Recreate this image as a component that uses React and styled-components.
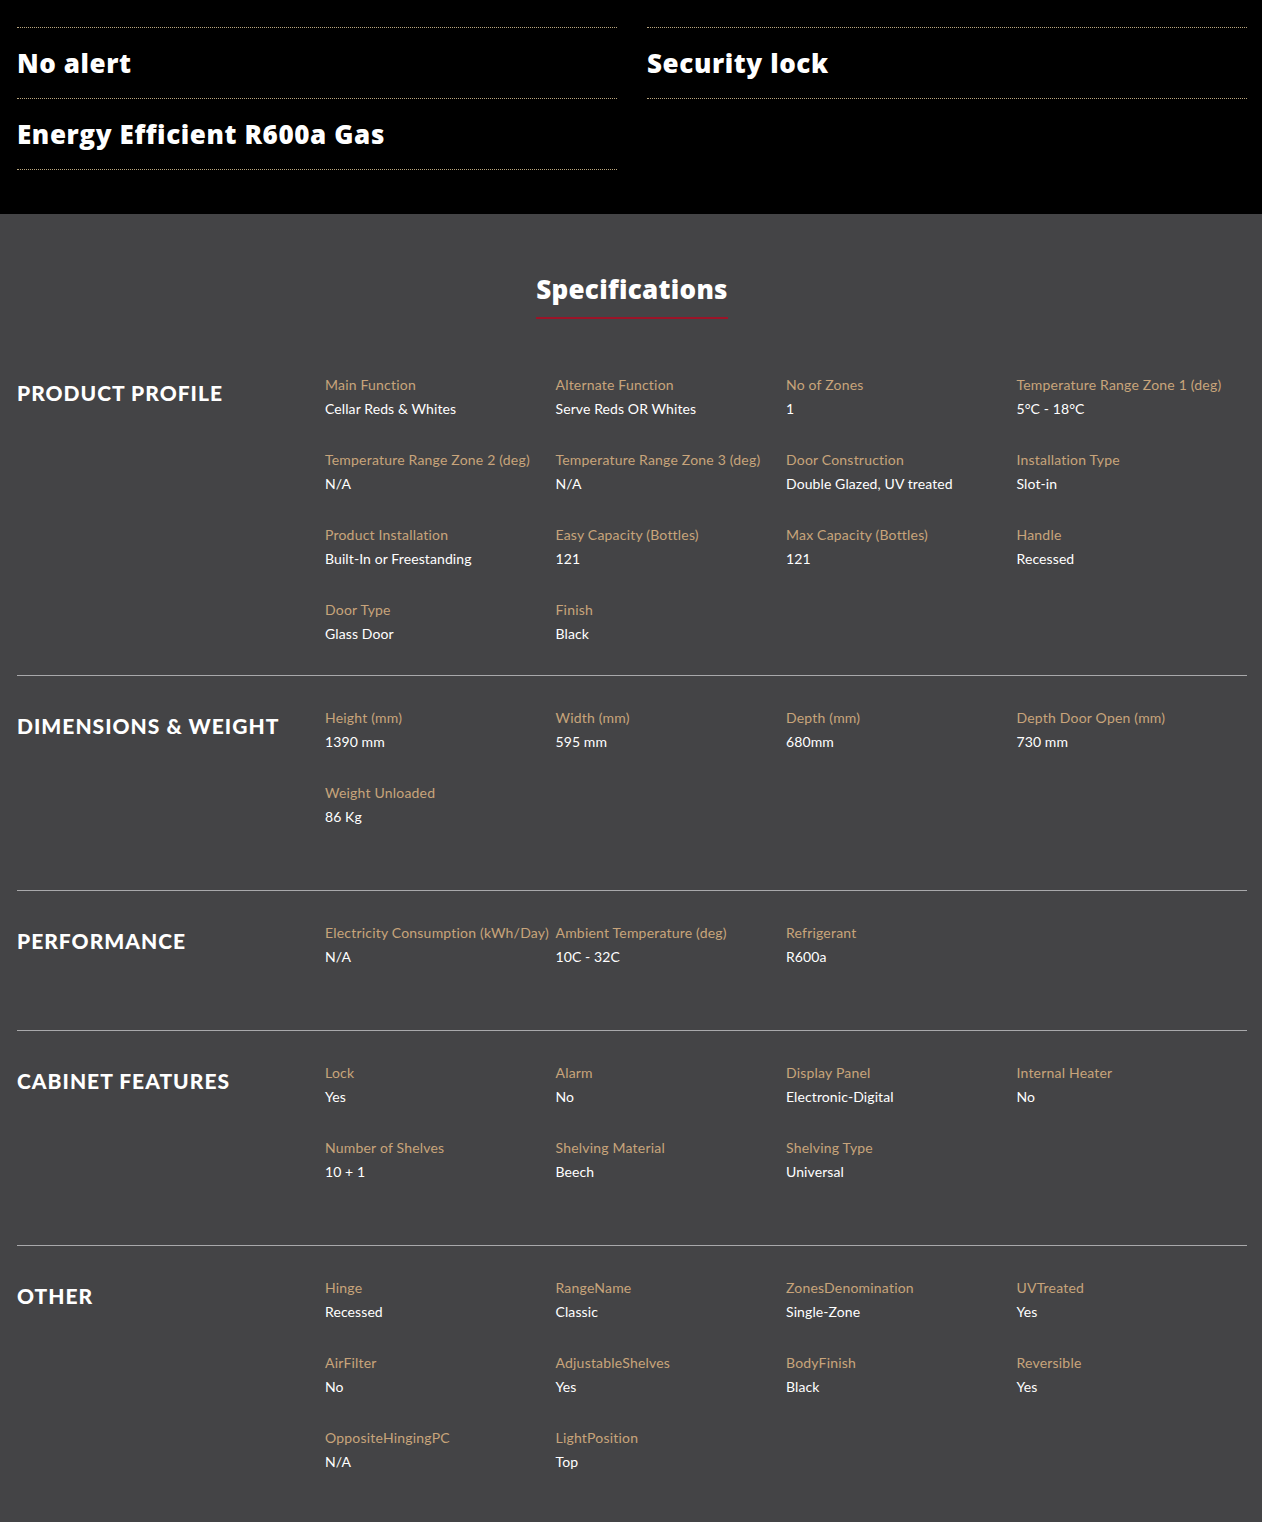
import React from 'react';
import styled, { createGlobalStyle } from 'styled-components';

const highlights = [
  ['No alert', 'Energy Efficient R600a Gas'],
  ['Security lock'],
];

const sections = [
  {
    title: 'PRODUCT PROFILE',
    items: [
      ['Main Function', 'Cellar Reds & Whites'],
      ['Alternate Function', 'Serve Reds OR Whites'],
      ['No of Zones', '1'],
      ['Temperature Range Zone 1 (deg)', '5°C - 18°C'],
      ['Temperature Range Zone 2 (deg)', 'N/A'],
      ['Temperature Range Zone 3 (deg)', 'N/A'],
      ['Door Construction', 'Double Glazed, UV treated'],
      ['Installation Type', 'Slot-in'],
      ['Product Installation', 'Built-In or Freestanding'],
      ['Easy Capacity (Bottles)', '121'],
      ['Max Capacity (Bottles)', '121'],
      ['Handle', 'Recessed'],
      ['Door Type', 'Glass Door'],
      ['Finish', 'Black'],
    ],
  },
  {
    title: 'DIMENSIONS & WEIGHT',
    items: [
      ['Height (mm)', '1390 mm'],
      ['Width (mm)', '595 mm'],
      ['Depth (mm)', '680mm'],
      ['Depth Door Open (mm)', '730 mm'],
      ['Weight Unloaded', '86 Kg'],
    ],
  },
  {
    title: 'PERFORMANCE',
    items: [
      ['Electricity Consumption (kWh/Day)', 'N/A'],
      ['Ambient Temperature (deg)', '10C - 32C'],
      ['Refrigerant', 'R600a'],
    ],
  },
  {
    title: 'CABINET FEATURES',
    items: [
      ['Lock', 'Yes'],
      ['Alarm', 'No'],
      ['Display Panel', 'Electronic-Digital'],
      ['Internal Heater', 'No'],
      ['Number of Shelves', '10 + 1'],
      ['Shelving Material', 'Beech'],
      ['Shelving Type', 'Universal'],
    ],
  },
  {
    title: 'OTHER',
    items: [
      ['Hinge', 'Recessed'],
      ['RangeName', 'Classic'],
      ['ZonesDenomination', 'Single-Zone'],
      ['UVTreated', 'Yes'],
      ['AirFilter', 'No'],
      ['AdjustableShelves', 'Yes'],
      ['BodyFinish', 'Black'],
      ['Reversible', 'Yes'],
      ['OppositeHingingPC', 'N/A'],
      ['LightPosition', 'Top'],
    ],
  },
];

function App() {
  return (
    <>
      <GlobalStyle />
      <Highlights>
        {highlights.map((col, i) => (
          <HighlightColumn key={i}>
            {col.map((text) => (
              <HighlightItem key={text}>{text}</HighlightItem>
            ))}
          </HighlightColumn>
        ))}
      </Highlights>

      <Specs>
        <SpecTitle>
          <span>Specifications</span>
        </SpecTitle>

        {sections.map((s, idx) => (
          <Section key={s.title} $first={idx === 0} $last={idx === sections.length - 1}>
            <SectionHeading>{s.title}</SectionHeading>
            <SpecGrid>
              {s.items.map(([label, value]) => (
                <SpecItem key={label}>
                  <SpecLabel>{label}</SpecLabel>
                  <SpecValue>{value}</SpecValue>
                </SpecItem>
              ))}
            </SpecGrid>
          </Section>
        ))}
      </Specs>
    </>
  );
}

export default App;

const GlobalStyle = createGlobalStyle`
  body {
    margin: 0;
    background: #444446;
    font-family: Lato, "Open Sans", sans-serif;
    -webkit-font-smoothing: antialiased;
  }
`;

const Highlights = styled.div`
  background: #000;
  padding: 27px 15px 44px 17px;
  display: grid;
  grid-template-columns: 600px 600px;
  column-gap: 30px;
`;

const HighlightColumn = styled.div`
  border-top: 1px dotted #b9a67f;
  align-self: start;
`;

const HighlightItem = styled.div`
  height: 70px;
  display: flex;
  align-items: center;
  border-bottom: 1px dotted #b9a67f;
  color: #fff;
  font-family: "Open Sans", Lato, sans-serif;
  font-size: 26px;
  font-weight: 800;
  letter-spacing: 0.6px;
`;

const Specs = styled.div`
  padding: 57px 15px 18px 17px;
`;

const SpecTitle = styled.h2`
  margin: 0 0 56px;
  text-align: center;
  font-family: "Open Sans", Lato, sans-serif;
  font-size: 26px;
  font-weight: 800;
  color: #fff;
  letter-spacing: 0.3px;

  span {
    display: inline-block;
    padding-bottom: 10px;
    border-bottom: 2px solid #9b1428;
  }
`;

const Section = styled.div`
  display: grid;
  grid-template-columns: 308px 1fr;
  padding: ${({ $first }) => ($first ? '0' : '32px')} 0 ${({ $first, $last }) => ($first || $last ? '0' : '32px')};
  border-bottom: ${({ $last }) => ($last ? 'none' : '1px solid #a9a9ab')};
`;

const SectionHeading = styled.h3`
  margin: 5px 0 0;
  color: #fff;
  font-size: 21px;
  font-weight: 900;
  letter-spacing: 1px;
`;

const SpecGrid = styled.div`
  display: grid;
  grid-template-columns: repeat(4, 1fr);
`;

const SpecItem = styled.div`
  box-sizing: border-box;
  height: 75px;
  padding-top: 1px;
  display: flex;
  flex-direction: column;
  gap: 7px;
`;

const SpecLabel = styled.div`
  color: #c8a47b;
  font-size: 14px;
  line-height: 17px;
  letter-spacing: 0.2px;
  white-space: nowrap;
`;

const SpecValue = styled.div`
  color: #fff;
  font-size: 14px;
  line-height: 17px;
  letter-spacing: 0.1px;
`;
